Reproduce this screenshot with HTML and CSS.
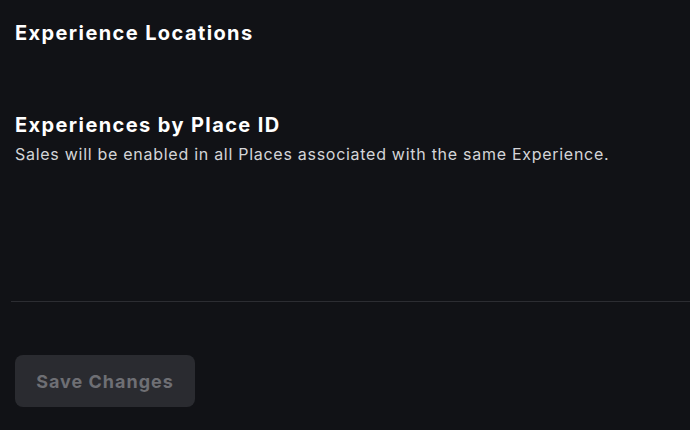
FILE: index.html
```html
<!DOCTYPE html>
<html lang="en">
<head>
    <meta charset="UTF-8">
    <title>Experience Locations</title>
    <link rel="stylesheet" href="styles.css">
</head>
<body>
    <div class="page">
        <section class="block">
            <h2 class="title">Experience Locations</h2>
        </section>
        <section class="block places">
            <h2 class="title">Experiences by Place ID</h2>
            <p class="hint">Sales will be enabled in all Places associated with the same Experience.</p>
        </section>
        <hr class="divider">
        <div class="actions">
            <button class="btn" disabled>Save Changes</button>
        </div>
    </div>
</body>
</html>
```

FILE: styles.css
```css
body {
    margin: 0;
    background: #111216;
    color: #fff;
    font-family: 'Inter', 'Noto Sans', sans-serif;
}
.page {
    padding: 20px 0 0 15px;
}
.title {
    margin: 0;
    font-size: 20px;
    line-height: 26px;
    font-weight: 700;
    letter-spacing: 1.4px;
}
.places {
    margin-top: 66px;
}
.hint {
    margin: 5px 0 0;
    font-size: 16px;
    line-height: 22px;
    color: #d4d5d8;
    letter-spacing: 0.72px;
}
.divider {
    margin: 136px 0 0 -4px;
    border: 0;
    border-top: 1px solid #2c2d32;
}
.actions {
    padding-top: 53px;
}
.btn {
    width: 180px;
    height: 52px;
    border: 0;
    border-radius: 8px;
    background: #2a2b30;
    color: #6e6f74;
    font-family: inherit;
    font-size: 18px;
    font-weight: 700;
    letter-spacing: 1px;
}
```
